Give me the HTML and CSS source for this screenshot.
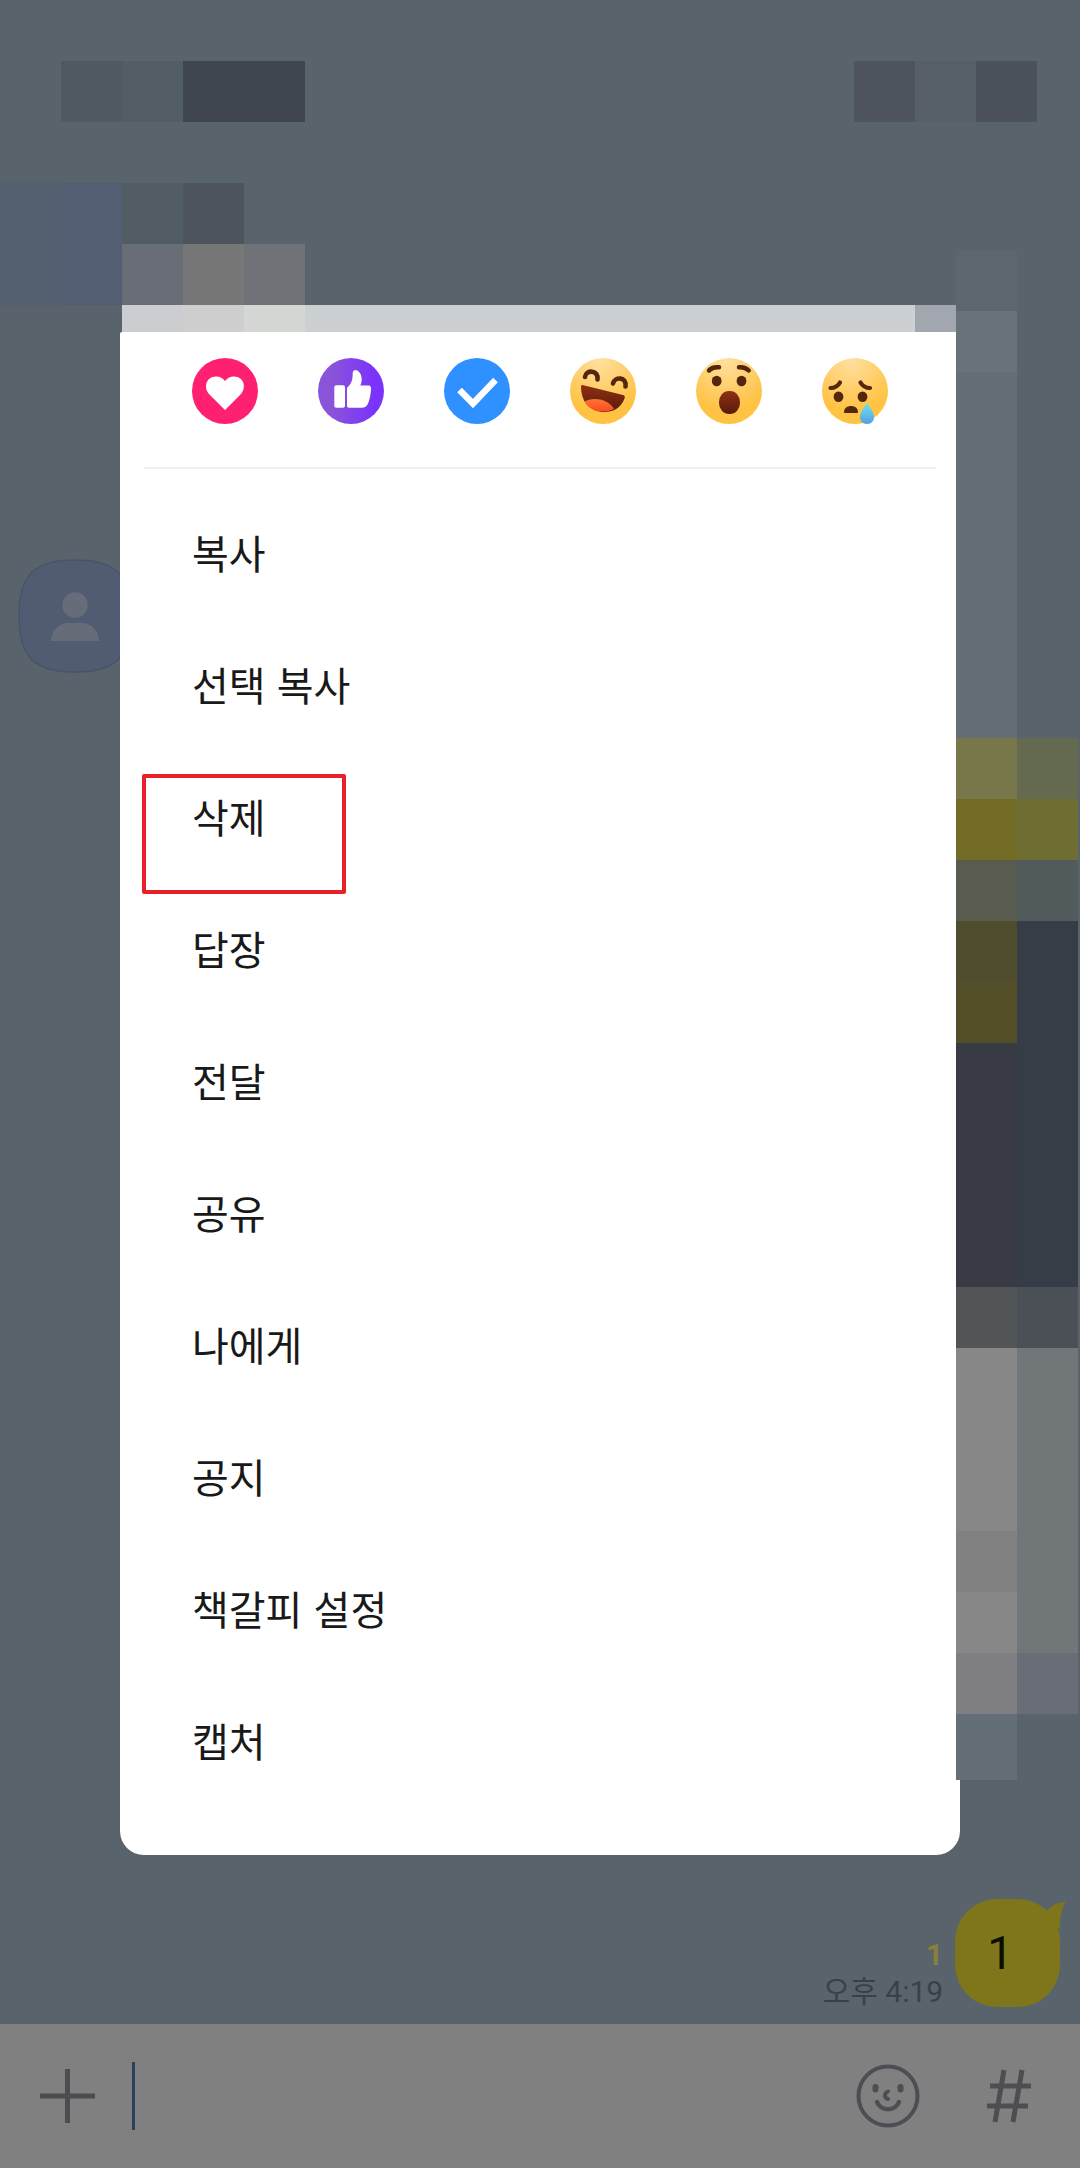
FILE: index.html
```html
<!DOCTYPE html>
<html lang="ko">
<head>
    <meta charset="UTF-8">
    <meta name="viewport" content="width=device-width, initial-scale=1.0">
    <title>채팅방</title>
    <link rel="stylesheet" href="styles.css">
</head>
<body>
    <!-- Chat room -->
    <div class="chat">
        <div class="chat-top">
            <svg width="305" height="244" shape-rendering="crispEdges" aria-hidden="true">
                <rect x="61" width="61" height="61" fill="#505860"/>
                <rect x="122" width="61" height="61" fill="#535d65"/>
                <rect x="183" width="122" height="61" fill="#40464d"/>
                <rect y="122" width="61" height="122" fill="#54606f"/>
                <rect x="61" y="122" width="61" height="122" fill="#535e72"/>
                <rect x="122" y="122" width="61" height="61" fill="#525c63"/>
                <rect x="183" y="122" width="61" height="61" fill="#4d545c"/>
                <rect x="122" y="183" width="61" height="61" fill="#696d75"/>
                <rect x="183" y="183" width="61" height="61" fill="#777777"/>
                <rect x="244" y="183" width="61" height="61" fill="#6f7276"/>
            </svg>
            <svg width="183" height="61" shape-rendering="crispEdges" aria-hidden="true">
                <rect width="61" height="61" fill="#4d545d"/>
                <rect x="61" width="61" height="61" fill="#565e67"/>
                <rect x="122" width="61" height="61" fill="#4a5158"/>
            </svg>
        </div>

        <svg class="avatar" width="114" height="114" viewBox="0 0 114 114" aria-hidden="true">
            <path d="M57 1C98 1 113 16 113 57S98 113 57 113S1 98 1 57S16 1 57 1Z" fill="#515c73" stroke="#4a5469" stroke-width="1.5"/>
            <circle cx="57" cy="46" r="12.7" fill="#676c79"/>
            <path d="M33 82C33 71 42 64 50 64H64C72 64 81 71 81 82Z" fill="#676c79"/>
        </svg>

        <div class="message">
            <div class="message-info">
                <span class="unread">1</span>
                <span class="time">오후 4:19</span>
            </div>
            <div class="bubble">
                1
                <svg class="bubble-tail" width="24" height="30" viewBox="0 0 24 30" aria-hidden="true">
                    <path d="M4 10C10 5 15 1 23.5 1C19 8 18 16 18 28L4 20Z" fill="#7f761b"/>
                </svg>
            </div>
        </div>
    </div>

    <!-- Message input -->
    <form class="composer">
        <button type="button" class="icon-btn" aria-label="추가">
            <svg width="56" height="56" viewBox="0 0 56 56">
                <path d="M0 28H55M27.5 1V55" stroke="#4b4d50" stroke-width="5"/>
            </svg>
        </button>
        <span class="caret"></span>
        <input type="text" aria-label="메시지 입력">
        <button type="button" class="icon-btn" aria-label="이모티콘">
            <svg width="64" height="64" viewBox="0 0 64 64" fill="none" stroke="#4d4e53" stroke-linecap="round">
                <circle cx="32" cy="32" r="29.5" stroke-width="4"/>
                <path d="M19.5 23v2.5M44.500 23v2.5" stroke-width="6"/>
                <path d="M32 27.5C28 29 28 34 32 35" stroke-width="4"/>
                <path d="M21 38C25 47.5 39 47.5 43 38" stroke-width="4.5"/>
            </svg>
        </button>
        <button type="button" class="icon-btn" aria-label="샵검색">
            <svg width="46" height="54" viewBox="0 0 46 54" fill="none" stroke="#4d4e53" stroke-width="5">
                <path d="M18 1L9 53M36 1L27 53M4 17H45M1 37H42"/>
            </svg>
        </button>
    </form>

    <!-- Message menu -->
    <div class="popup">
        <div class="popup-strip">
            <span class="cell cell-1"></span>
            <span class="cell cell-2"></span>
            <span class="cell cell-3"></span>
            <span class="cell cell-wide"></span>
            <span class="cell cell-last"></span>
        </div>
        <div class="dialog" role="dialog" aria-label="메시지 메뉴">
            <div class="reactions">
                <button type="button" aria-label="하트">
                    <svg viewBox="0 0 66 66">
                        <circle cx="33" cy="33" r="33" fill="#ff2072"/>
                        <path d="M33 52L17.5 36.5C11 30 14 18.5 24 18.5C28 18.5 31 20.5 33 23C35 20.5 38 18.5 42 18.5C52 18.5 55 30 48.5 36.5Z" fill="#fff"/>
                    </svg>
                </button>
                <button type="button" aria-label="좋아요">
                    <svg viewBox="0 0 66 66">
                        <defs>
                            <linearGradient id="purple" x1="0" y1="0" x2="1" y2="0">
                                <stop offset="0.2" stop-color="#8a54d9"/>
                                <stop offset="0.85" stop-color="#7b33fb"/>
                            </linearGradient>
                        </defs>
                        <circle cx="33" cy="33" r="33" fill="url(#purple)"/>
                        <rect x="16.3" y="27.3" width="10.7" height="22.4" rx="2" fill="#fff"/>
                        <path d="M29 47.5V30L32 26.5C34 24 34.7 20 34.7 15C34.7 12 37 12 38.5 12.3C42 13.3 44 18 43.7 22C43.6 24 43 26 42.3 27.5H50.5C52.5 27.5 53.2 29 53 31C52.5 38 51.5 43 49.5 46.5C48 49 46.5 49.7 44 49.7H31C29.8 49.7 29 49 29 47.5Z" fill="#fff"/>
                    </svg>
                </button>
                <button type="button" aria-label="확인">
                    <svg viewBox="0 0 66 66">
                        <circle cx="33" cy="33" r="33" fill="#2e91ff"/>
                        <path d="M15.5 32L29 45.5L51.5 22" fill="none" stroke="#fff" stroke-width="6.5"/>
                    </svg>
                </button>
                <button type="button" aria-label="웃음">
                    <svg viewBox="0 0 66 66">
                        <defs>
                            <radialGradient id="face" cx="0.45" cy="0.05" r="0.75">
                                <stop offset="0" stop-color="#ffe0a0"/>
                                <stop offset="0.55" stop-color="#ffcf6c"/>
                                <stop offset="1" stop-color="#ffc344"/>
                            </radialGradient>
                            <linearGradient id="mouth" x1="0" y1="0" x2="0" y2="1">
                                <stop offset="0" stop-color="#8f2f14"/>
                                <stop offset="1" stop-color="#571c08"/>
                            </linearGradient>
                            <linearGradient id="tongue" x1="0" y1="0" x2="0" y2="1">
                                <stop offset="0" stop-color="#ff7436"/>
                                <stop offset="1" stop-color="#fb4a20"/>
                            </linearGradient>
                            <linearGradient id="tear" x1="0" y1="0" x2="0" y2="1">
                                <stop offset="0" stop-color="#6ae6ee"/>
                                <stop offset="1" stop-color="#579ce2"/>
                            </linearGradient>
                        </defs>
                        <circle cx="33" cy="33" r="33" fill="url(#face)"/>
                        <path d="M15 19C16 11 29 12 27.5 21.5M43 25.5C45 18 57 19 55.5 28.5" fill="none" stroke="#54260d" stroke-width="4.6" stroke-linecap="round"/>
                        <path d="M12.5 27L53 37C55 37.5 55.2 39 54.5 40.5C51 50 43 54.5 32 54C19 52.5 11 43 11 29C11 27.5 11.5 27 12.5 27Z" fill="url(#mouth)"/>
                        <path d="M14.5 43.5C23 38.5 38 41 44 50.7C36 56 20 54 14.5 43.5Z" fill="url(#tongue)"/>
                    </svg>
                </button>
                <button type="button" aria-label="놀람">
                    <svg viewBox="0 0 66 66">
                        <circle cx="33" cy="33" r="33" fill="url(#face)"/>
                        <path d="M13 12.5C15.5 9.5 19 8.8 23 9.3M43 9.3C47 8.8 50 9.8 52.7 12.5" fill="none" stroke="#54260d" stroke-width="4.5" stroke-linecap="round"/>
                        <ellipse cx="20.7" cy="23" rx="4.9" ry="5.3" fill="#54260d"/>
                        <ellipse cx="45.5" cy="23" rx="4.9" ry="5.3" fill="#54260d"/>
                        <rect x="23" y="33" width="21" height="23" rx="10" ry="11" fill="url(#mouth)"/>
                    </svg>
                </button>
                <button type="button" aria-label="슬픔">
                    <svg viewBox="0 0 66 66">
                        <circle cx="33" cy="33" r="33" fill="url(#face)"/>
                        <path d="M8.5 30C13 30 16 28 18 24.5M38.5 24.5C40.5 28 43.5 30 48 30" fill="none" stroke="#54260d" stroke-width="4.2" stroke-linecap="round"/>
                        <ellipse cx="16.5" cy="38.7" rx="4.9" ry="5.2" fill="#54260d"/>
                        <ellipse cx="40.5" cy="38.7" rx="4.9" ry="5.2" fill="#54260d"/>
                        <path d="M22 54C22 46 36 46 36 54C36 55 35 55 34.5 55H23.5C22.5 55 22 55 22 54Z" fill="#54260d"/>
                        <path d="M45 45C48 50 52 54 52 59C52 63 49.5 66 45 66S38 63 38 59C38 54 42 50 45 45Z" fill="url(#tear)"/>
                    </svg>
                </button>
            </div>
            <ul class="menu">
                <li><button type="button">복사</button></li>
                <li><button type="button">선택 복사</button></li>
                <li class="marked"><button type="button">삭제</button></li>
                <li><button type="button">답장</button></li>
                <li><button type="button">전달</button></li>
                <li><button type="button">공유</button></li>
                <li><button type="button">나에게</button></li>
                <li><button type="button">공지</button></li>
                <li><button type="button">책갈피 설정</button></li>
                <li><button type="button">캡처</button></li>
            </ul>
        </div>
    </div>

    <!-- Pixelated messages on the right edge, over the dialog -->
    <svg class="side-mosaic" width="122" height="1530" shape-rendering="crispEdges" aria-hidden="true">
        <rect width="61" height="61" fill="#5c666e"/>
        <rect y="61" width="61" height="61" fill="#69717a"/>
        <rect y="122" width="61" height="366" fill="#646e76"/>
        <rect y="488" width="61" height="61" fill="#78774a"/>
        <rect x="61" y="488" width="61" height="61" fill="#646a50"/>
        <rect y="549" width="61" height="61" fill="#726c26"/>
        <rect x="61" y="549" width="61" height="61" fill="#6e6d32"/>
        <rect y="610" width="61" height="61" fill="#585b4e"/>
        <rect x="61" y="610" width="61" height="61" fill="#515b5b"/>
        <rect y="671" width="61" height="61" fill="#504d2e"/>
        <rect y="732" width="61" height="61" fill="#524f29"/>
        <rect y="793" width="61" height="244" fill="#383b44"/>
        <rect x="61" y="671" width="61" height="366" fill="#373d47"/>
        <rect y="1037" width="61" height="61" fill="#525558"/>
        <rect x="61" y="1037" width="61" height="61" fill="#4b4f56"/>
        <rect y="1098" width="61" height="305" fill="#878787"/>
        <rect y="1281" width="61" height="61" fill="#818181"/>
        <rect x="61" y="1098" width="61" height="305" fill="#717678"/>
        <rect y="1403" width="61" height="61" fill="#7f7f83"/>
        <rect x="61" y="1403" width="61" height="61" fill="#696d75"/>
        <rect y="1464" width="61" height="66" fill="#646e76"/>
    </svg>
</body>
</html>
```
FILE: styles.css
```css
* {
    margin: 0;
    padding: 0;
    box-sizing: border-box;
}

body {
    font-family: Roboto, 'Noto Sans CJK KR', sans-serif;
    background-color: #59636b;
    display: flex;
    flex-direction: column;
    min-height: 100vh;
    position: relative;
}

svg {
    display: block;
}

button {
    font: inherit;
    color: inherit;
    background: none;
    border: none;
    cursor: pointer;
}

/* Chat room */
.chat {
    flex: 1;
    display: flex;
    flex-direction: column;
}

.chat-top {
    display: flex;
    justify-content: space-between;
    align-items: flex-start;
    padding: 61px 43px 0 0;
}

.avatar {
    margin: 254px 0 0 18px;
}

.message {
    display: flex;
    justify-content: flex-end;
    align-items: flex-end;
    gap: 12px;
    margin-top: auto;
    padding: 0 20px 17px;
}

.message-info {
    display: flex;
    flex-direction: column;
    align-items: flex-end;
    gap: 6px;
    font-size: 30px;
    line-height: 31px;
}

.unread {
    font-weight: 700;
    color: #85803a;
}

.time {
    color: #394147;
}

.bubble {
    position: relative;
    background-color: #7f761b;
    color: #0d0d02;
    font-size: 46px;
    line-height: 60px;
    padding: 24px 47px 24px 32px;
    border-radius: 42px;
}

.bubble-tail {
    position: absolute;
    top: 2px;
    right: -6px;
}

/* Message input */
.composer {
    display: flex;
    align-items: center;
    height: 144px;
    padding: 0 48px 0 40px;
    background-color: #808080;
}

.caret {
    width: 3px;
    height: 68px;
    margin-left: 36px;
    background-color: #25425f;
}

.composer input {
    flex: 1;
    min-width: 0;
    height: 68px;
    font-size: 40px;
    background: none;
    border: none;
    outline: none;
}

.icon-btn + .icon-btn {
    margin-left: 66px;
}

/* Message menu */
.popup {
    position: absolute;
    top: 305px;
    left: 120px;
    right: 120px;
}

.popup-strip {
    display: flex;
    height: 27px;
    margin: 0 4px 0 2px;
}

.cell {
    width: 61px;
}

.cell-1 {
    background-color: #cccdd0;
}

.cell-2 {
    background-color: #cfcfcf;
}

.cell-3 {
    background-color: #d5d7d5;
}

.cell-wide {
    flex: 1;
    background-color: #ccd0d3;
}

.cell-last {
    width: 41px;
    background-color: #a2a7af;
}

.dialog {
    background-color: #fff;
    border-radius: 2px 2px 24px 24px;
    padding: 26px 24px 49px;
}

.reactions {
    display: flex;
    justify-content: space-between;
    padding: 0 48px 43px;
    border-bottom: 2px solid #f0f0f0;
}

.reactions button,
.reactions svg {
    width: 66px;
    height: 66px;
}

.menu {
    list-style: none;
    padding-top: 17px;
}

.menu li {
    position: relative;
}

.menu button {
    display: block;
    width: 100%;
    height: 132px;
    padding: 0 48px;
    font-family: 'Noto Sans CJK KR', sans-serif;
    font-size: 40px;
    text-align: left;
    color: #191919;
}

/* Red frame round the delete item */
.marked::after {
    content: "";
    position: absolute;
    top: 24px;
    left: -2px;
    width: 204px;
    height: 120px;
    box-sizing: border-box;
    border: 4px solid #e92028;
    border-radius: 2px;
    pointer-events: none;
}

.side-mosaic {
    position: absolute;
    top: 250px;
    right: 2px;
}
```
